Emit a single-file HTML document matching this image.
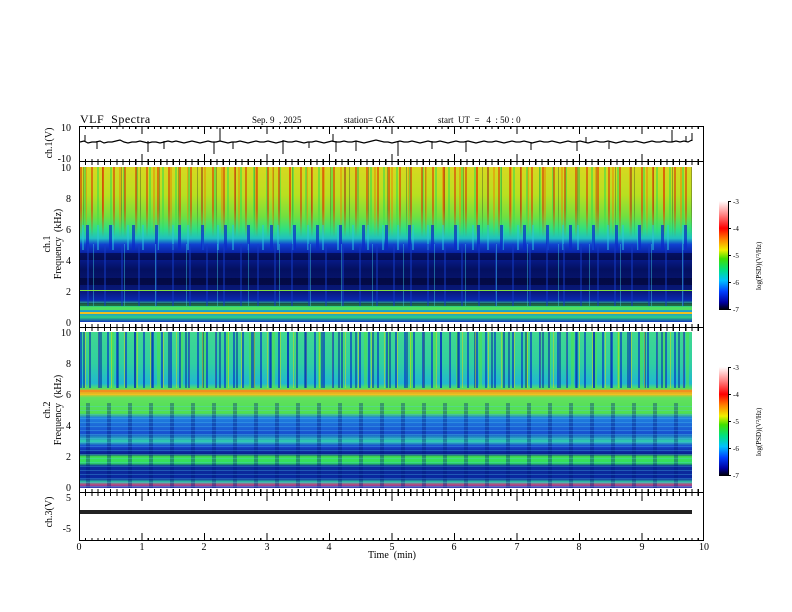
<!DOCTYPE html>
<html><head><meta charset="utf-8"><style>
body{margin:0;width:792px;height:612px;background:#fff;position:relative;overflow:hidden;font-family:"Liberation Serif",serif;color:#000}
.a{position:absolute}
.t{position:absolute;font-size:10px;line-height:10px;white-space:nowrap}
.frame{position:absolute;left:79px;width:625px;border:1px solid #000;box-sizing:border-box}
.spec{position:absolute;left:80px;width:612px}
.ticks{position:absolute;left:79px;width:625px;height:3px;background:repeating-linear-gradient(90deg,#000 0 1px,transparent 1px 6.25px)}
</style></head><body>
<div class="t" style="left:80px;top:114px;font-size:12px;letter-spacing:0.5px">VLF&nbsp; Spectra</div>
<div class="t" style="left:252px;top:115px;font-size:9px">Sep. 9&nbsp; , 2025</div>
<div class="t" style="left:344px;top:115px;font-size:9px">station= GAK</div>
<div class="t" style="left:438px;top:115px;font-size:9px">start&nbsp; UT&nbsp; =&nbsp;&nbsp; 4&nbsp; : 50 : 0</div>

<div class="frame" style="top:126px;height:36px"></div>
<div class="frame" style="top:161px;height:167px"></div>
<div class="frame" style="top:327px;height:166px"></div>
<div class="frame" style="top:492px;height:49px"></div>

<!-- ch1 spectrogram -->
<div class="spec" style="top:167px;height:155px;background:
linear-gradient(180deg,#d8d820 0%,#b8e020 18%,#70e040 32%,#30e080 40%,#20c0c0 46%,#1040d0 50%,#0820a0 56%,#041060 66%,#081878 80%,#0a2ab0 86%,#40e060 89%,#20c0a0 91%,#2090e0 94%,#30d080 97%,#1030c0 100%)"></div>
<div class="spec" style="top:167px;height:70px;background:
repeating-linear-gradient(90deg,rgba(220,40,0,.55) 0 2px,transparent 2px 11px),
repeating-linear-gradient(90deg,transparent 0 4px,rgba(40,220,80,.5) 4px 6px,transparent 6px 13px),
repeating-linear-gradient(90deg,transparent 0 5px,rgba(240,120,0,.45) 5px 7px,transparent 7px 17px),
repeating-linear-gradient(90deg,transparent 0 3px,rgba(40,40,40,.35) 3px 4px,transparent 4px 19px);
-webkit-mask:linear-gradient(180deg,#000 60%,transparent);mask:linear-gradient(180deg,#000 60%,transparent)"></div>
<div class="spec" style="top:225px;height:25px;background:
repeating-linear-gradient(90deg,transparent 0 6px,rgba(10,40,200,.7) 6px 9px,transparent 9px 23px),
repeating-linear-gradient(90deg,transparent 0 2px,rgba(40,200,220,.5) 2px 4px,transparent 4px 15px)"></div>
<div class="spec" style="top:244px;height:62px;background:
repeating-linear-gradient(90deg,transparent 0 13px,rgba(60,200,220,.45) 13px 14px,transparent 14px 31px),
repeating-linear-gradient(90deg,transparent 0 7px,rgba(20,60,200,.5) 7px 9px,transparent 9px 17px),
repeating-linear-gradient(180deg,transparent 0 9px,rgba(0,0,30,.5) 9px 16px,transparent 16px 25px)"></div>
<div class="spec" style="top:290px;height:1px;background:#80e040"></div>
<div class="spec" style="top:307px;height:3px;background:#50e060"></div>
<div class="spec" style="top:312px;height:2px;background:#f0c020"></div>

<!-- ch2 spectrogram -->
<div class="spec" style="top:332px;height:156px;background:
linear-gradient(180deg,#40d890 0%,#30d0a0 20%,#20b8d0 33%,#50e060 36%,#f0a020 38%,#e0c020 40%,#60e060 42%,#50e050 52%,#2080e0 55%,#1850d0 65%,#30d0b0 70%,#1848d0 73%,#0a2090 78%,#40e050 80%,#30e060 84%,#0c2a98 86%,#0a28a0 94%,#30c0a0 96%,#c04080 98%,#2040c0 100%)"></div>
<div class="spec" style="top:332px;height:56px;background:
repeating-linear-gradient(90deg,rgba(0,40,200,.6) 0 2px,transparent 2px 9px),
repeating-linear-gradient(90deg,transparent 0 5px,rgba(240,220,0,.45) 5px 6px,transparent 6px 13px),
repeating-linear-gradient(90deg,transparent 0 3px,rgba(0,30,160,.5) 3px 5px,transparent 5px 17px),
repeating-linear-gradient(90deg,transparent 0 8px,rgba(80,230,60,.5) 8px 11px,transparent 11px 23px)"></div>
<div class="spec" style="top:403px;height:85px;background:
repeating-linear-gradient(180deg,transparent 0 3px,rgba(80,200,240,.3) 3px 4px),
repeating-linear-gradient(90deg,transparent 0 6px,rgba(0,20,120,.35) 6px 10px,transparent 10px 21px)"></div>
<div class="spec" style="top:390px;height:2px;background:#f09020"></div>
<div class="spec" style="top:394px;height:1px;background:#f0c020"></div>

<!-- tick marks -->
<div class="ticks" style="top:126px"></div><div class="ticks" style="top:159px"></div>
<div class="ticks" style="top:162px"></div><div class="ticks" style="top:324px"></div>
<div class="ticks" style="top:328px"></div><div class="ticks" style="top:489px"></div>
<div class="ticks" style="top:493px"></div><div class="ticks" style="top:538px"></div>
<svg class="a" style="left:0;top:0" width="792" height="612">
<g stroke="#000" stroke-width="1">
<path d="M142 126v8M204.5 126v8M267 126v8M329.5 126v8M392 126v8M454.5 126v8M517 126v8M579.5 126v8M642 126v8M142 154v8M204.5 154v8M267 154v8M329.5 154v8M392 154v8M454.5 154v8M517 154v8M579.5 154v8M642 154v8M142 533v8M204.5 533v8M267 533v8M329.5 533v8M392 533v8M454.5 533v8M517 533v8M579.5 533v8M642 533v8M142 493v8M204.5 493v8M267 493v8M329.5 493v8M392 493v8M454.5 493v8M517 493v8M579.5 493v8M642 493v8"/>
<path fill="none" stroke-width="1.2" d="M80 142 L84 141 L88 143 L92 142 L96 142 L100 141 L104 143 L108 142 L112 142 L116 141 L120 140 L124 142 L128 143 L132 142 L136 142 L140 141 L144 142 L148 143 L152 142 L156 142 L160 143 L164 142 L168 141 L172 142 L176 141 L180 142 L184 143 L188 142 L192 141 L196 142 L200 143 L204 142 L208 141 L212 142 L216 142 L220 141 L224 142 L228 143 L232 142 L236 142 L240 141 L244 142 L248 143 L252 142 L256 141 L260 142 L264 142 L268 141 L272 142 L276 143 L280 142 L284 141 L288 142 L292 142 L296 141 L300 142 L304 143 L308 142 L312 142 L316 141 L320 142 L324 143 L328 142 L332 141 L336 142 L340 142 L344 141 L348 142 L352 142 L356 141 L360 142 L364 143 L368 142 L372 141 L376 140 L380 141 L384 142 L388 142 L392 143 L396 142 L400 141 L404 142 L408 142 L412 141 L416 142 L420 143 L424 142 L428 141 L432 142 L436 142 L440 141 L444 142 L448 143 L452 142 L456 141 L460 142 L464 142 L468 141 L472 142 L476 143 L480 142 L484 141 L488 142 L492 142 L496 141 L500 142 L504 143 L508 142 L512 141 L516 142 L520 142 L524 141 L528 142 L532 143 L536 142 L540 141 L544 142 L548 142 L552 141 L556 142 L560 143 L564 142 L568 141 L572 142 L576 142 L580 141 L584 142 L588 143 L592 142 L596 141 L600 142 L604 142 L608 141 L612 142 L616 143 L620 142 L624 141 L628 142 L632 142 L636 141 L640 142 L644 143 L648 142 L652 141 L656 142 L660 142 L664 141 L668 142 L672 142 L676 141 L680 142 L684 141 L688 142 L692 140"/>
<path stroke-width="1" d="M85 135v7M97 141v8M148 141v11M164 141v8M214 142v12M220 128v13M233 142v7M283 140v14M309 142v6M333 134v8M336 141v11M356 141v10M398 142v14M432 141v8M466 142v10M531 142v8M577 141v10M586 137v5M609 142v7M672 130v12M686 136v6M692 133v8"/>
</g>
<rect x="80" y="510" width="612" height="4" fill="#222"/>
<defs>
<linearGradient id="cb" x1="0" y1="1" x2="0" y2="0">
<stop offset="0" stop-color="#000"/><stop offset="0.07" stop-color="#0000a0"/><stop offset="0.17" stop-color="#0040ff"/><stop offset="0.27" stop-color="#00c0ff"/><stop offset="0.37" stop-color="#00e080"/><stop offset="0.47" stop-color="#40e000"/><stop offset="0.55" stop-color="#f0f000"/><stop offset="0.65" stop-color="#ff8000"/><stop offset="0.75" stop-color="#ff0000"/><stop offset="0.87" stop-color="#ff8080"/><stop offset="1" stop-color="#fff"/>
</linearGradient></defs>
<rect x="719" y="201" width="9" height="109" fill="url(#cb)"/>
<rect x="719" y="367" width="9" height="109" fill="url(#cb)"/>
<g stroke="#000"><path d="M728.5 201v109M728 201.5h3M728 228.5h3M728 255.5h3M728 282.5h3M728 309.5h3M728.5 367v109M728 367.5h3M728 394.5h3M728 421.5h3M728 448.5h3M728 475.5h3"/></g>
<g font-family="Liberation Serif,serif" font-size="7">
<text x="733" y="204">-3</text><text x="733" y="231">-4</text><text x="733" y="258">-5</text><text x="733" y="285">-6</text><text x="733" y="312">-7</text>
<text x="733" y="370">-3</text><text x="733" y="397">-4</text><text x="733" y="424">-5</text><text x="733" y="451">-6</text><text x="733" y="478">-7</text>
<text transform="translate(761,290) rotate(-90)" font-size="7">log(PSD)(V²/Hz)</text>
<text transform="translate(761,456) rotate(-90)" font-size="7">log(PSD)(V²/Hz)</text>
</g>
<g font-family="Liberation Serif,serif" font-size="10" text-anchor="end">
<text x="71" y="131">10</text><text x="71" y="162">-10</text>
<text x="71" y="171">10</text><text x="71" y="202">8</text><text x="71" y="233">6</text><text x="71" y="264">4</text><text x="71" y="295">2</text><text x="71" y="326">0</text>
<text x="71" y="336">10</text><text x="71" y="367">8</text><text x="71" y="398">6</text><text x="71" y="429">4</text><text x="71" y="460">2</text><text x="71" y="491">0</text>
<text x="71" y="501">5</text><text x="71" y="532">-5</text>
</g>
<g font-family="Liberation Serif,serif" font-size="10" text-anchor="middle">
<text x="79" y="550">0</text><text x="142" y="550">1</text><text x="204" y="550">2</text><text x="267" y="550">3</text><text x="329" y="550">4</text><text x="392" y="550">5</text><text x="454" y="550">6</text><text x="517" y="550">7</text><text x="579" y="550">8</text><text x="642" y="550">9</text><text x="704" y="550">10</text>
<text x="392" y="558">Time&#160; (min)</text>
<text transform="translate(52,143) rotate(-90)">ch.1(V)</text>
<text transform="translate(50,244) rotate(-90)">ch.1</text>
<text transform="translate(61,244) rotate(-90)">Frequency&#160; (kHz)</text>
<text transform="translate(50,410) rotate(-90)">ch.2</text>
<text transform="translate(61,410) rotate(-90)">Frequency&#160; (kHz)</text>
<text transform="translate(52,512) rotate(-90)">ch.3(V)</text>
</g>
</svg>
</body></html>
